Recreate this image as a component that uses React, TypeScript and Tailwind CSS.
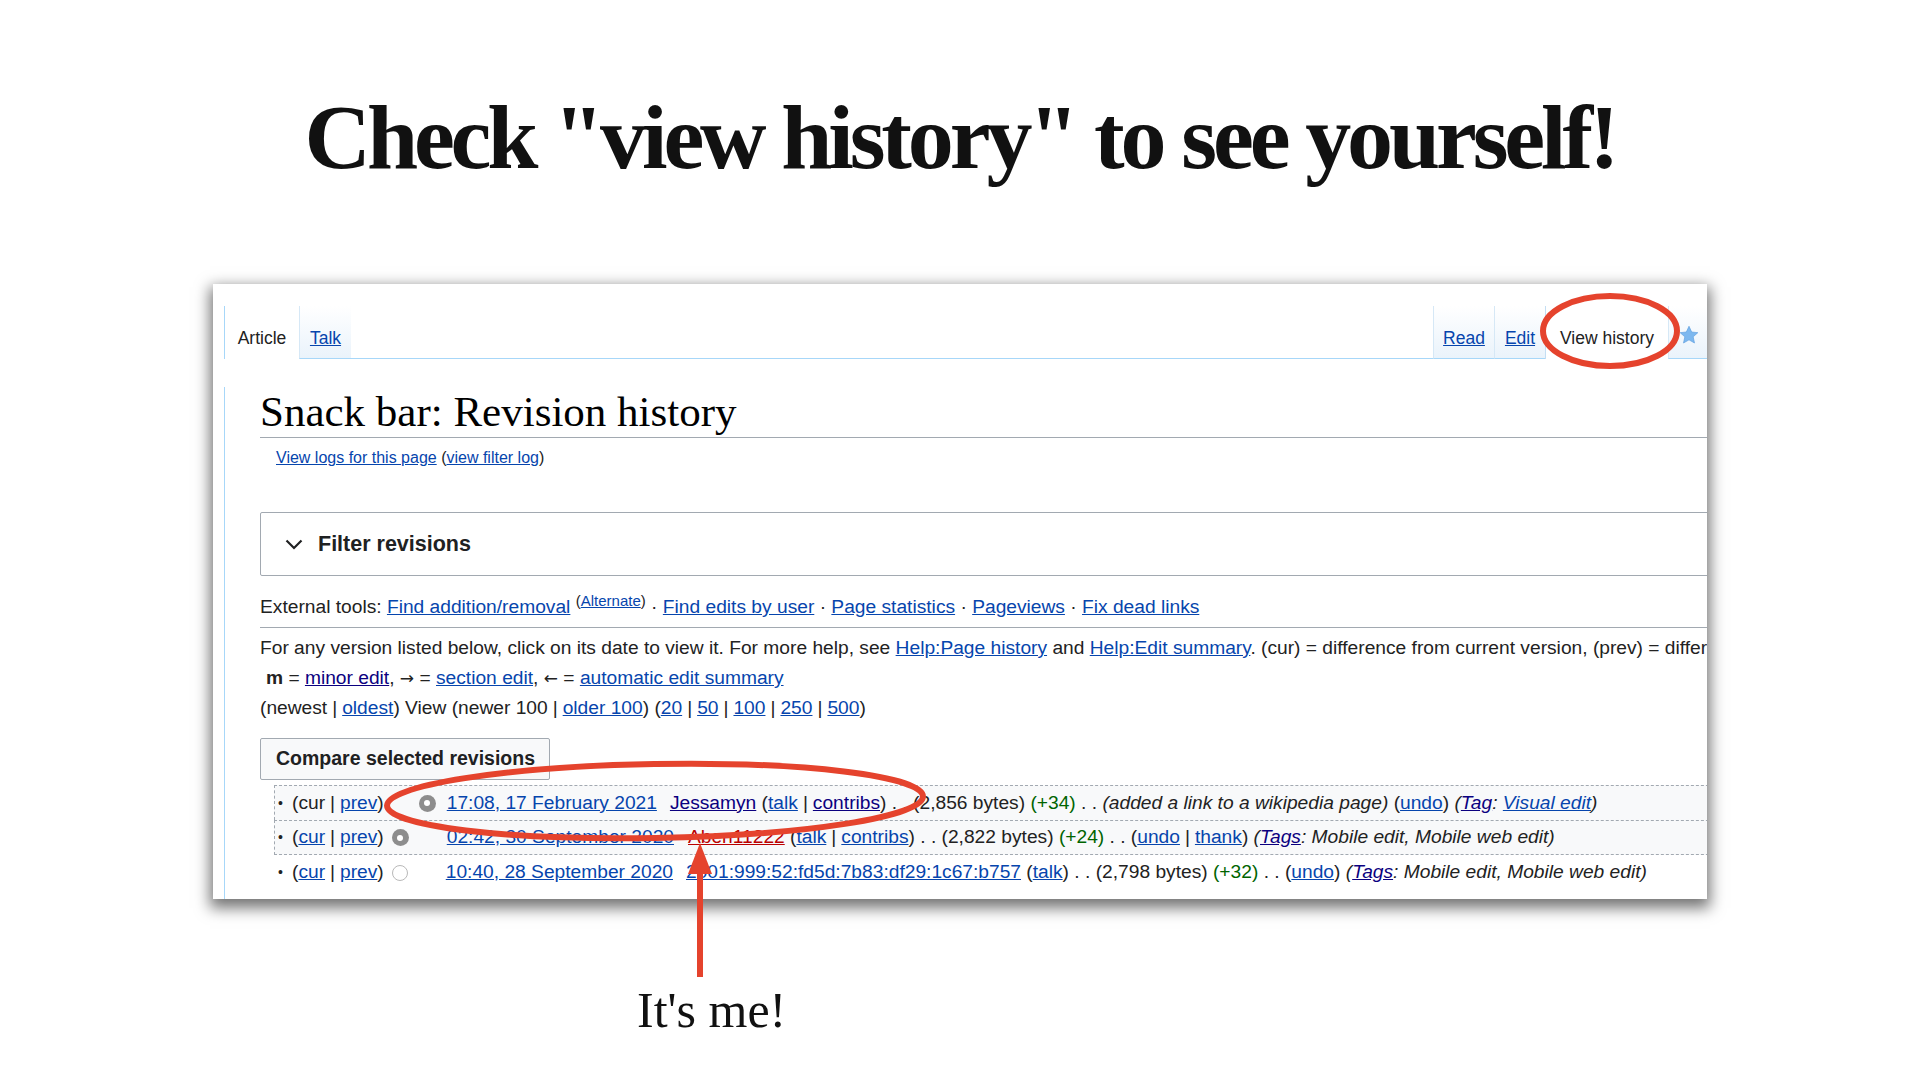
import * as React from "react";

const link = "text-[#0645ad] underline";
const visited = "text-[#0b0080] underline";

function Radio({ state }: { state: "on" | "off" | "none" }) {
  if (state === "none") return <span className="block h-[16px] w-[16px] shrink-0" />;
  if (state === "off")
    return <span className="block h-[16px] w-[16px] shrink-0 rounded-full border border-[#b9b9b9] bg-white" />;
  return (
    <span className="flex h-[17px] w-[17px] shrink-0 items-center justify-center rounded-full bg-[#8d8d8d]">
      <span className="h-[6px] w-[6px] rounded-full bg-white" />
    </span>
  );
}

function Sep() {
  return <span className="mx-[5px]">|</span>;
}

function Arrow({ children }: { children: React.ReactNode }) {
  return <span className="font-['DejaVu_Sans',sans-serif] text-[17px]">{children}</span>;
}

function Row({
  boxed,
  last,
  left,
  right,
  curLink,
  children,
}: {
  boxed?: boolean;
  last?: boolean;
  left: "on" | "off" | "none";
  right: "on" | "off" | "none";
  curLink?: boolean;
  children: React.ReactNode;
}) {
  return (
    <li
      className={
        "flex h-[35px] items-center whitespace-nowrap " +
        (boxed ? "border-l border-t border-dashed border-[#a2a9b1] bg-[#f8f9fa] pl-[3px] " : "pl-[4px] ") +
        (last ? "border-b" : "")
      }
    >
      <span className="w-[14px] text-[14px]">•</span>
      <span>
        ({curLink ? <a className={link}>cur</a> : "cur"}
        <Sep />
        <a className={link}>prev</a>)
      </span>
      <span className="ml-[8px] flex">
        <Radio state={left} />
      </span>
      <span className="ml-[11px] flex">
        <Radio state={right} />
      </span>
      <span className="ml-[11px]">{children}</span>
    </li>
  );
}

function Tab({
  w,
  active,
  children,
}: {
  w: string;
  active?: boolean;
  children: React.ReactNode;
}) {
  return (
    <div
      className={
        "flex h-[53px] items-center justify-center border-l pt-[12px] " +
        w +
        (active
          ? " border-[#c4def3] bg-white"
          : " border-b border-l-[#d6e8f6] border-b-[#a7d7f9] bg-linear-to-b from-white to-[#eaf3fb]")
      }
    >
      {children}
    </div>
  );
}

export default function App() {
  return (
    <div className="relative flex h-[1080px] w-[1920px] flex-col items-center overflow-hidden bg-white">
      <h1 className="pt-[91px] font-['Liberation_Serif',serif] text-[92px] font-bold leading-none tracking-[-0.045em] text-[#111]">
        Check "view history" to see yourself!
      </h1>

      {/* screenshot panel */}
      <div className="mt-[101px] h-[615px] w-[1494px] shrink-0 overflow-hidden bg-white font-['Liberation_Sans',Arial,sans-serif] text-[#222] shadow-[0_6px_14px_3px_rgba(0,0,0,0.55)]">
        {/* tabs */}
        <div className="flex h-[75px] items-end text-[17.5px]">
          <div className="w-[11px]" />
          <Tab w="w-[75px] border-l-[#a7d7f9]" active>
            <span>Article</span>
          </Tab>
          <Tab w="w-[52px]">
            <a className={link}>Talk</a>
          </Tab>
          <div className="h-[1px] flex-1 bg-[#a7d7f9]" />
          <Tab w="w-[61px]">
            <a className={link}>Read</a>
          </Tab>
          <Tab w="w-[51px]">
            <a className={link}>Edit</a>
          </Tab>
          <Tab w="w-[123px]" active>
            <span>View history</span>
          </Tab>
          <Tab w="w-[39px]">
            <svg width="20" height="20" viewBox="0 0 24 24" className="ml-[2px] -mt-[6px]">
              <polygon
                points="12,1.5 15.2,8.4 22.6,9.2 17,14.2 18.6,21.6 12,17.8 5.4,21.6 7,14.2 1.4,9.2 8.8,8.4"
                fill="#7db8ef"
                stroke="#5d9fe0"
                strokeWidth="0.8"
              />
            </svg>
          </Tab>
        </div>

        {/* content */}
        <div className="ml-[11px] h-[540px] border-l border-[#a7d7f9] pl-[35px] text-[19.2px]">
          <h2 className="mt-[28px] border-b border-[#a2a9b1] font-['Liberation_Serif',serif] text-[43px] leading-[50px] text-black">
            Snack bar: Revision history
          </h2>
          <div className="mt-[10px] pl-[16px] text-[16px] leading-[20px]">
            <a className={link}>View logs for this page</a> (<a className={link}>view filter log</a>)
          </div>

          <div className="mt-[44px] flex h-[64px] w-[calc(100%+20px)] items-center gap-[15px] rounded-[2px] border border-[#a2a9b1] pl-[24px]">
            <svg width="18" height="11" viewBox="0 0 18 11">
              <polyline points="1.5,1.5 9,9 16.5,1.5" fill="none" stroke="#202122" strokeWidth="2.2" />
            </svg>
            <span className="text-[21.5px] font-bold text-[#202122]">Filter revisions</span>
          </div>

          <div className="mt-[16px] whitespace-nowrap border-b border-[#a2a9b1] pb-[5px] leading-[30px]">
            External tools: <a className={link}>Find addition/removal</a>{" "}
            <sup className="text-[15px] leading-none">
              (<a className={link}>Alternate</a>)
            </sup>{" "}
            · <a className={link}>Find edits by user</a> · <a className={link}>Page statistics</a> ·{" "}
            <a className={link}>Pageviews</a> · <a className={link}>Fix dead links</a>
          </div>

          <div className="mt-[5px] whitespace-nowrap leading-[30px]">
            <div>
              For any version listed below, click on its date to view it. For more help, see{" "}
              <a className={link}>Help:Page history</a> and <a className={link}>Help:Edit summary</a>. (cur) =
              difference from current version, (prev) = difference with preceding version,
            </div>
            <div className="pl-[6px]">
              <b>m</b> = <a className={visited}>minor edit</a>, <Arrow>→</Arrow> ={" "}
              <a className={link}>section edit</a>, <Arrow>←</Arrow> ={" "}
              <a className={link}>automatic edit summary</a>
            </div>
            <div>
              (newest
              <Sep />
              <a className={link}>oldest</a>) View (newer 100
              <Sep />
              <a className={link}>older 100</a>) (<a className={link}>20</a>
              <Sep />
              <a className={link}>50</a>
              <Sep />
              <a className={link}>100</a>
              <Sep />
              <a className={link}>250</a>
              <Sep />
              <a className={link}>500</a>)
            </div>
          </div>

          <button className="mt-[15px] flex h-[42px] w-[290px] items-center rounded-[2px] border border-[#a2a9b1] bg-[#f8f9fa] pl-[15px] text-[19.5px] font-bold text-[#202122]">
            Compare selected revisions
          </button>

          <ul className="ml-[14px] mt-[5px] w-[1500px]">
            <Row boxed left="none" right="on">
              <a className={link}>17:08, 17 February 2021</a>
              <a className={visited + " ml-[13px]"}>Jessamyn</a> (<a className={link}>talk</a>
              <Sep />
              <a className={visited}>contribs</a>) . . (2,856 bytes) <span className="text-[#006400]">(+34)</span> . .{" "}
              <i>(added a link to a wikipedia page)</i> (<a className={link}>undo</a>){" "}
              <i>
                (<a className={visited}>Tag</a>: <a className={link}>Visual edit</a>)
              </i>
            </Row>
            <Row boxed last curLink left="on" right="none">
              <a className={link}>02:42, 30 September 2020</a>
              <a className="ml-[14px] text-[#ba0000] underline">Aben11222</a> (<a className={link}>talk</a>
              <Sep />
              <a className={link}>contribs</a>) . . (2,822 bytes) <span className="text-[#006400]">(+24)</span> . . (
              <a className={link}>undo</a>
              <Sep />
              <a className={link}>thank</a>){" "}
              <i>
                (<a className={visited}>Tags</a>: Mobile edit, Mobile web edit)
              </i>
            </Row>
            <Row curLink left="off" right="none">
              <a className={link}>10:40, 28 September 2020</a>
              <a className={link + " ml-[13px]"}>2001:999:52:fd5d:7b83:df29:1c67:b757</a> (
              <a className={link}>talk</a>) . . (2,798 bytes) <span className="text-[#006400]">(+32)</span> . . (
              <a className={link}>undo</a>){" "}
              <i>
                (<a className={visited}>Tags</a>: Mobile edit, Mobile web edit)
              </i>
            </Row>
          </ul>
        </div>
      </div>

      <p className="ml-[637px] mt-[86px] self-start font-['Liberation_Serif',serif] text-[50px] leading-none text-[#111]">
        It's me!
      </p>

      {/* red annotations */}
      <svg className="pointer-events-none absolute left-0 top-0" width="1920" height="1080">
        <ellipse
          cx="655"
          cy="801"
          rx="268"
          ry="37"
          fill="none"
          stroke="#e5432d"
          strokeWidth="6"
          transform="rotate(-1 655 801)"
        />
        <ellipse cx="1610" cy="331" rx="67" ry="35" fill="none" stroke="#e5432d" strokeWidth="6" />
        <line x1="700" y1="977" x2="700" y2="868" stroke="#e5432d" strokeWidth="6" />
        <polygon points="700,843 688,874 712,874" fill="#e5432d" />
      </svg>
    </div>
  );
}
